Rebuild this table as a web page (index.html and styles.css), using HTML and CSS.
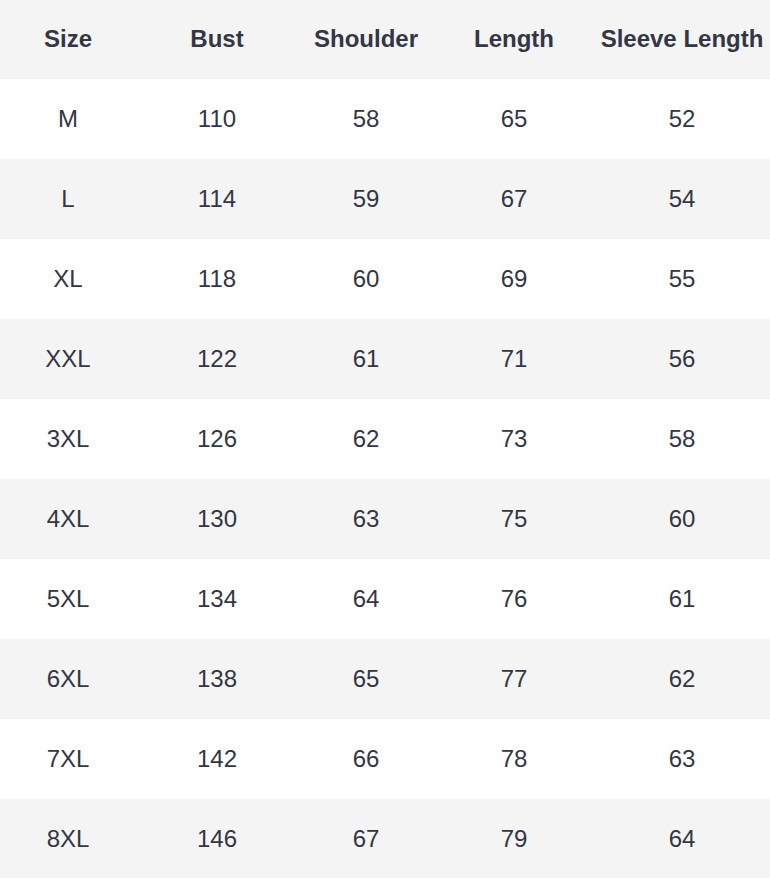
FILE: index.html
```html
<!DOCTYPE html>
<html>
<head>
<meta charset="utf-8">
<link rel="stylesheet" href="styles.css">
</head>
<body>
<table class="size-table">
  <colgroup>
    <col class="c1"><col class="c2"><col class="c3"><col class="c4"><col class="c5">
  </colgroup>
  <thead>
    <tr class="head"><th>Size</th><th>Bust</th><th>Shoulder</th><th>Length</th><th>Sleeve Length</th></tr>
  </thead>
  <tbody>
    <tr><td>M</td><td>110</td><td>58</td><td>65</td><td>52</td></tr>
    <tr><td>L</td><td>114</td><td>59</td><td>67</td><td>54</td></tr>
    <tr><td>XL</td><td>118</td><td>60</td><td>69</td><td>55</td></tr>
    <tr><td>XXL</td><td>122</td><td>61</td><td>71</td><td>56</td></tr>
    <tr><td>3XL</td><td>126</td><td>62</td><td>73</td><td>58</td></tr>
    <tr><td>4XL</td><td>130</td><td>63</td><td>75</td><td>60</td></tr>
    <tr><td>5XL</td><td>134</td><td>64</td><td>76</td><td>61</td></tr>
    <tr><td>6XL</td><td>138</td><td>65</td><td>77</td><td>62</td></tr>
    <tr><td>7XL</td><td>142</td><td>66</td><td>78</td><td>63</td></tr>
    <tr><td>8XL</td><td>146</td><td>67</td><td>79</td><td>64</td></tr>
  </tbody>
</table>
</body>
</html>
```
FILE: styles.css
```css
html, body {
  margin: 0;
  padding: 0;
  background: #ffffff;
}
.size-table {
  width: 770px;
  border-collapse: collapse;
  table-layout: fixed;
  font-family: "Liberation Sans", Arial, sans-serif;
  font-size: 24px;
  color: #333645;
}
.c1 { width: 136px; }
.c2 { width: 162px; }
.c3 { width: 136px; }
.c4 { width: 160px; }
.c5 { width: 176px; }
.size-table th,
.size-table td {
  box-sizing: border-box;
  padding: 0;
  text-align: center;
  vertical-align: middle;
  white-space: nowrap;
}
.size-table th {
  font-weight: bold;
  height: 79px;
  padding-bottom: 2px;
}
.size-table td {
  height: 80px;
}
.head {
  background: #f4f4f4;
}
.size-table tbody tr:nth-child(even) {
  background: #f4f4f4;
}
```
